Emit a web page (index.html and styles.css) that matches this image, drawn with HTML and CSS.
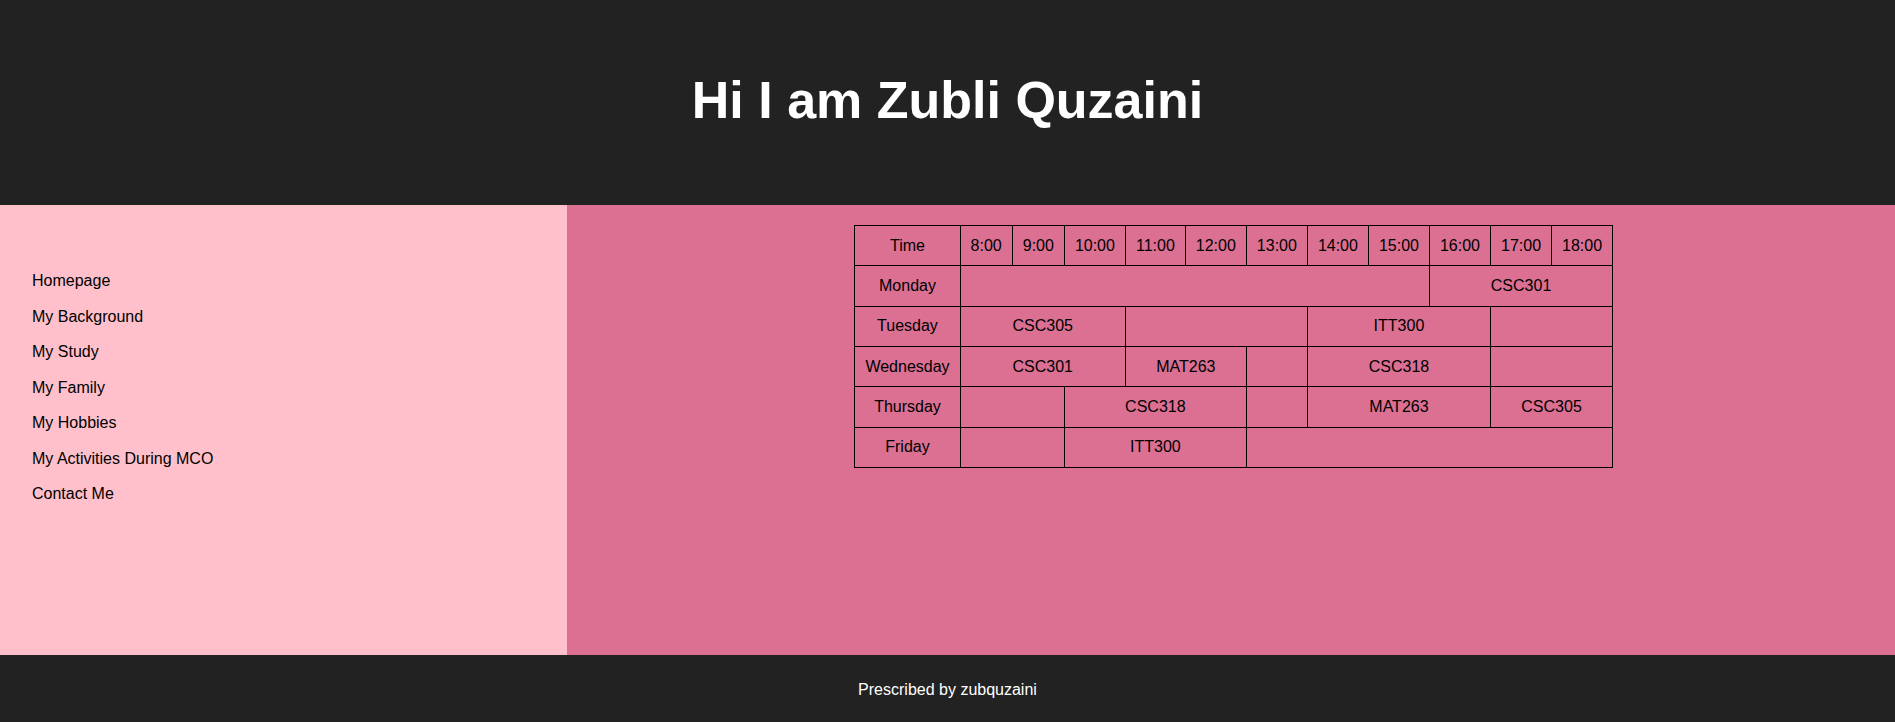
FILE: index.html
```html
<!DOCTYPE html>
<html lang="en">
<head>
<meta charset="utf-8">
<meta name="viewport" content="width=device-width, initial-scale=1">
<title>Zubli Quzaini</title>
<link rel="stylesheet" href="styles.css">
</head>
<body>
<header class="banner"><h1>Hi I am Zubli Quzaini</h1></header>
<div class="content">
<nav class="menu">
<ul class="menu-list">
<li><a href="#home">Homepage</a></li>
<li><a href="#background">My Background</a></li>
<li><a href="#study">My Study</a></li>
<li><a href="#family">My Family</a></li>
<li><a href="#hobbies">My Hobbies</a></li>
<li><a href="#activities">My Activities During MCO</a></li>
<li><a href="#contact">Contact Me</a></li>
</ul>
</nav>
<main class="main">
<table class="timetable">
<tr><td>Time</td><td>8:00</td><td>9:00</td><td>10:00</td><td>11:00</td><td>12:00</td><td>13:00</td><td>14:00</td><td>15:00</td><td>16:00</td><td>17:00</td><td>18:00</td></tr>
<tr><td>Monday</td><td colspan="8"></td><td colspan="3">CSC301</td></tr>
<tr><td>Tuesday</td><td colspan="3">CSC305</td><td colspan="3"></td><td colspan="3">ITT300</td><td colspan="2"></td></tr>
<tr><td>Wednesday</td><td colspan="3">CSC301</td><td colspan="2">MAT263</td><td></td><td colspan="3">CSC318</td><td colspan="2"></td></tr>
<tr><td>Thursday</td><td colspan="2"></td><td colspan="3">CSC318</td><td></td><td colspan="3">MAT263</td><td colspan="2">CSC305</td></tr>
<tr><td>Friday</td><td colspan="2"></td><td colspan="3">ITT300</td><td colspan="6"></td></tr>
</table>
</main>
</div>
<footer class="footer"><p>Prescribed by zubquzaini</p></footer>
</body>
</html>
```
FILE: styles.css
```css
* { box-sizing: border-box; }
body {
  margin: 0;
  min-height: 100vh;
  display: flex;
  flex-direction: column;
  font-family: "Liberation Sans", Arial, sans-serif;
  font-size: 16px;
  line-height: 18px;
  color: #000;
}
.banner {
  padding: 70px 32px 75px;
  background: #222;
  color: #fff;
  text-align: center;
}
.banner h1 { margin: 0; font-size: 52px; line-height: 60px; }
.content { display: flex; min-height: 450px; }
.menu { width: calc(30% - 2px); flex-shrink: 0; padding: 67px 32px; background: pink; }
.menu-list {
  display: flex;
  flex-direction: column;
  justify-content: space-between;
  min-height: 231px;
  margin: 0;
  padding: 0;
  list-style: none;
}
.menu a { color: inherit; text-decoration: none; }
.main { flex: 1; padding: 20px 20px 20px 26px; background: palevioletred; }
.timetable { height: 243px; margin: 0 auto; border-collapse: collapse; }
.timetable td { border: 1px solid #000; padding: 10px; text-align: center; }
.footer { flex: 1; padding: 26px 20px 22px; background: #222; color: #fff; text-align: center; }
.footer p { margin: 0; }
```
